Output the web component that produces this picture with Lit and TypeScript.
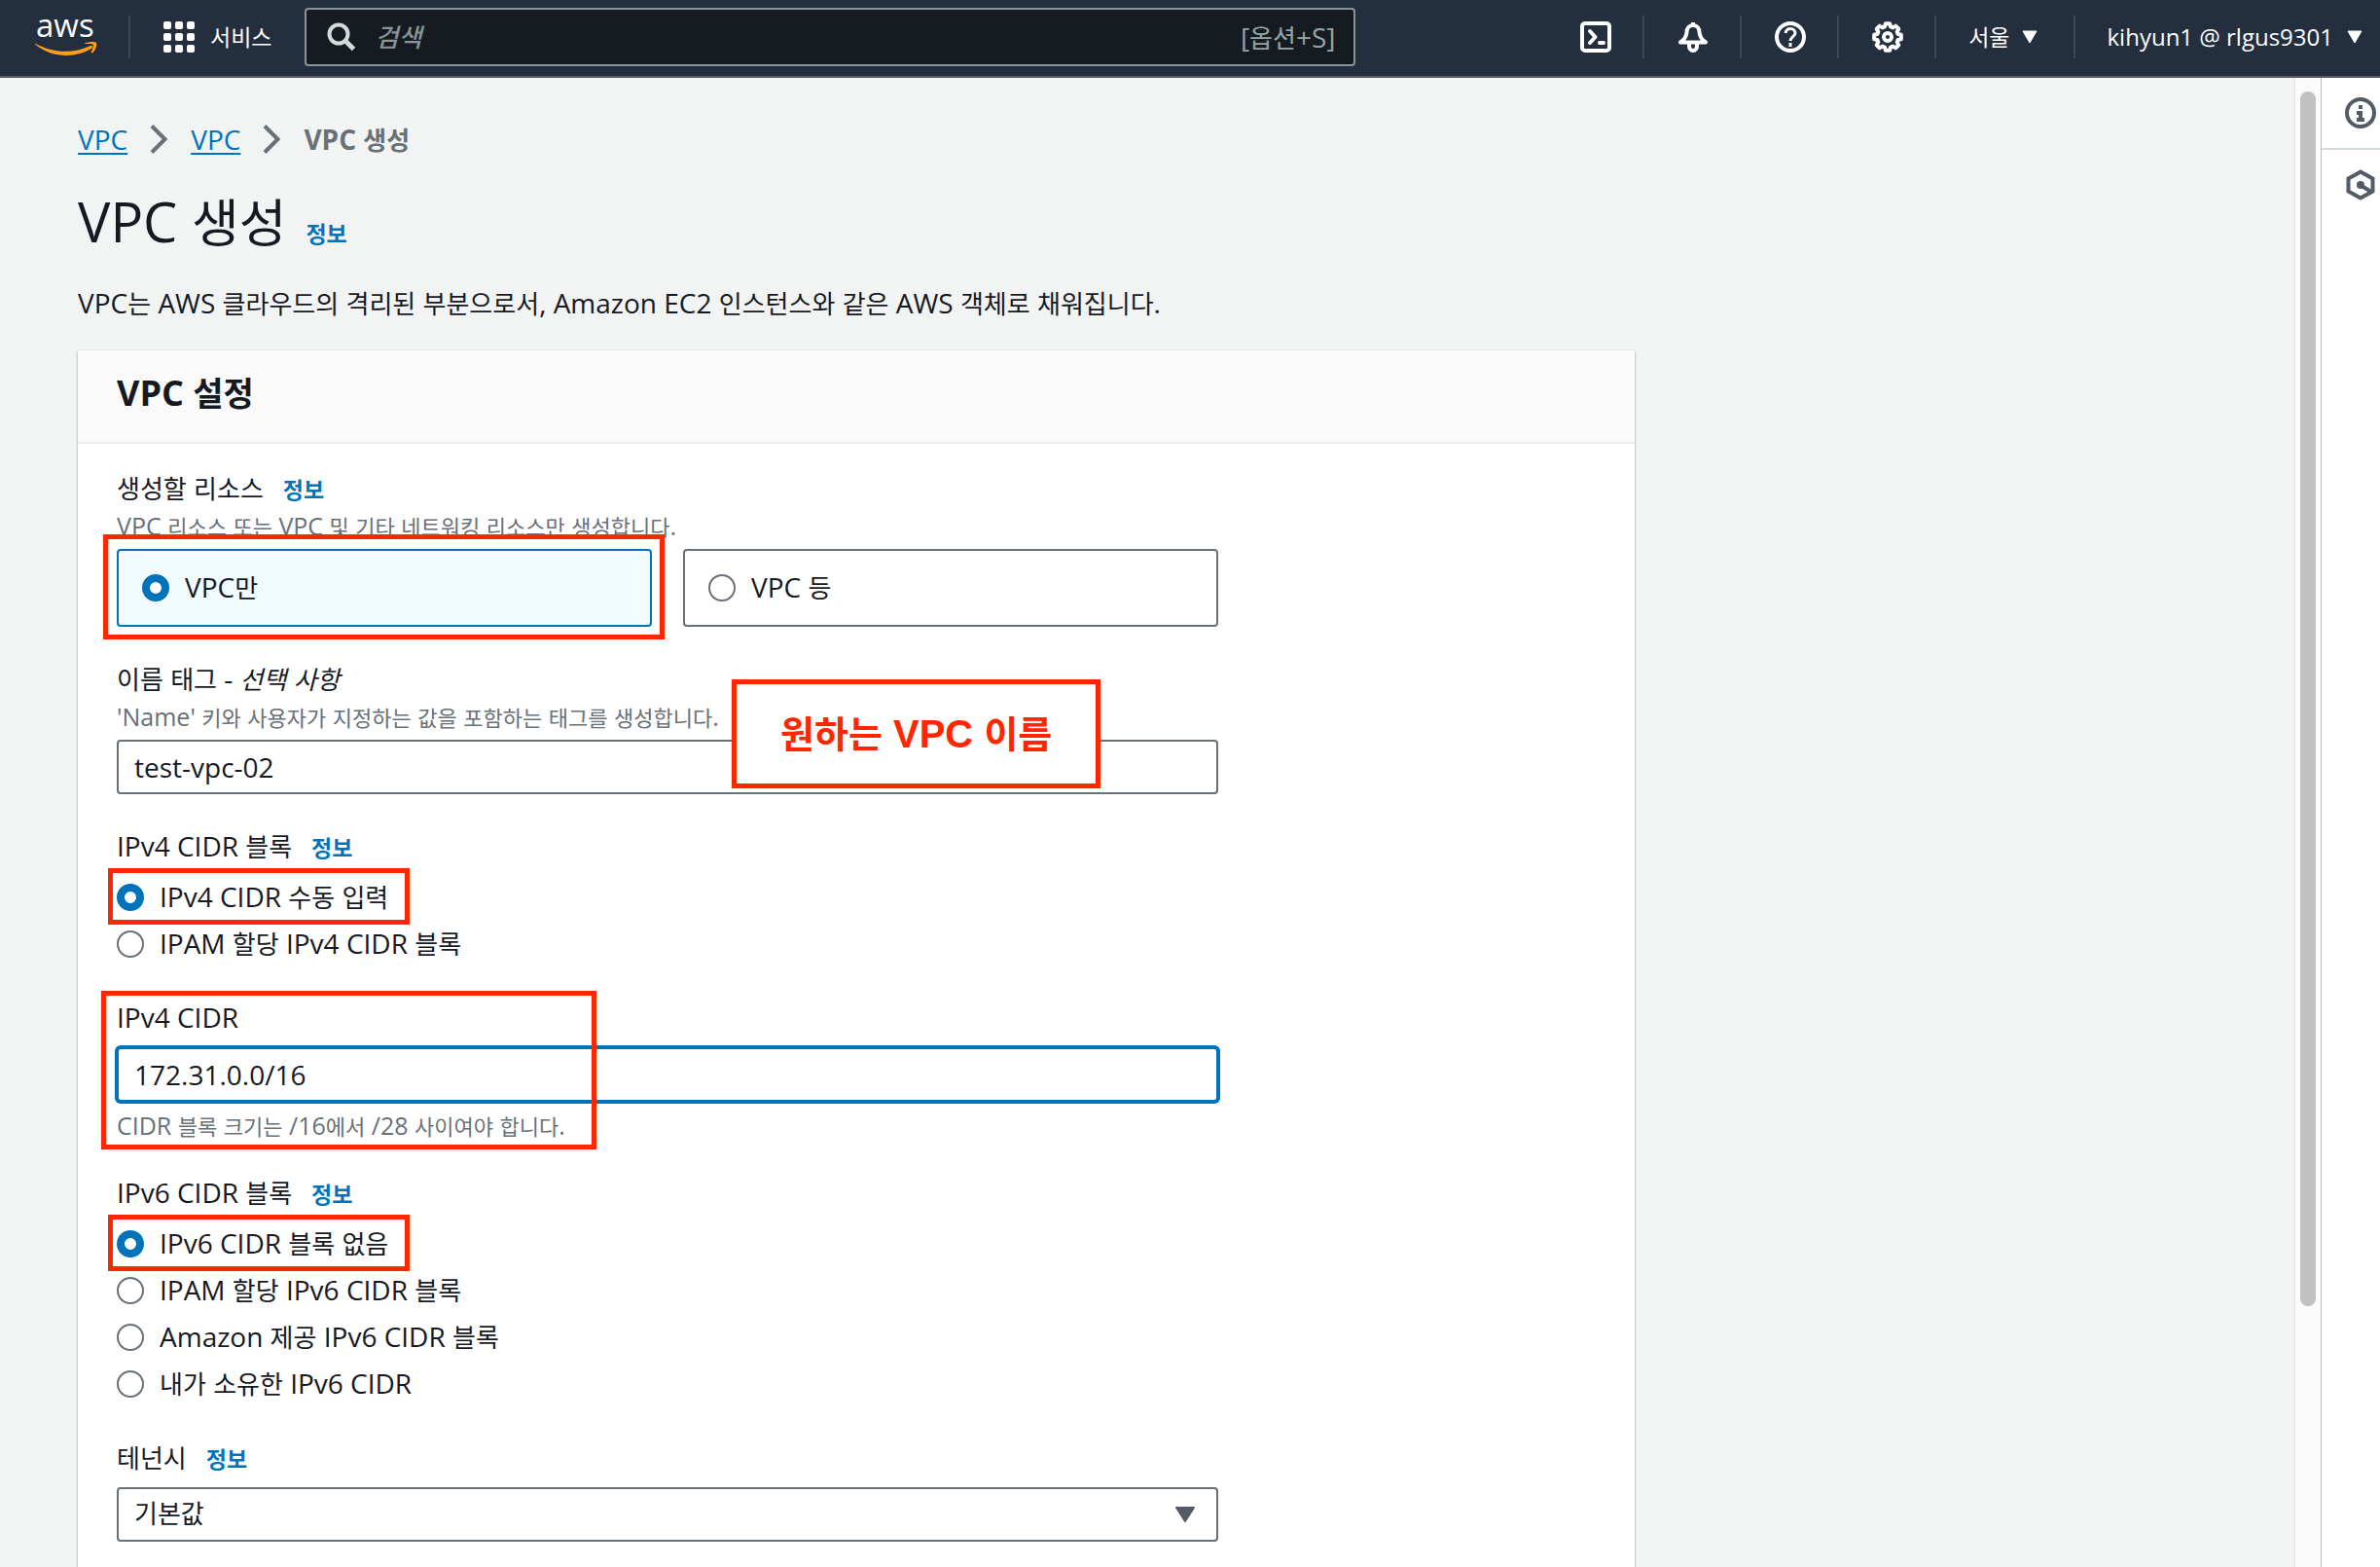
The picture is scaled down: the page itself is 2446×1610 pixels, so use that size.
import { LitElement, html, svg, css, nothing } from "lit";
import { customElement, property, state } from "lit/decorators.js";

/* Hangul glyphs are drawn one step smaller than the Latin text beside them. */
const mixed = (text: string) =>
  text
    .split(/([\uac00-\ud7a3]+)/)
    .map((part) =>
      /[\uac00-\ud7a3]/.test(part) ? html`<span class="ko">${part}</span>` : part
    );

const base = css`
  * {
    box-sizing: border-box;
  }
  :host {
    display: block;
    font-family: "Open Sans", "Noto Sans CJK KR", sans-serif;
    font-size: 28px;
    font-weight: 500;
    line-height: 44px;
    color: #16191f;
  }
  .ko {
    font-size: 26px;
    font-weight: 400;
    line-height: 1;
  }
  a {
    color: #0073bb;
    text-decoration: none;
  }
  button {
    font: inherit;
    color: inherit;
    background: none;
    border: 0;
    padding: 0;
    cursor: pointer;
  }
  svg {
    display: block;
    flex: none;
  }
`;

/* Closed outline of an eight-toothed wheel centred in a 32-unit box. */
const gearOutline = Array.from({ length: 8 }, (_, i) =>
  [
    [-16, 11],
    [-9, 14],
    [9, 14],
    [16, 11],
  ].map(([offset, radius]) => {
    const a = ((i * 45 + offset) * Math.PI) / 180;
    return `${(16 + radius * Math.sin(a)).toFixed(2)},${(16 - radius * Math.cos(a)).toFixed(2)}`;
  })
)
  .flat()
  .join(" ");

const icons = {
  terminal: svg`<rect x="2" y="2" width="28" height="28" rx="3"/><path d="M10 10l5.500 6-5.500 6M20 22h4" stroke-linecap="round"/>`,
  bell: svg`<path d="M16 4c-4 0-6.500 3-6.500 7 0 5-3 8-6.500 10.500h26C25.500 19 22.500 16 22.500 11c0-4-2.500-7-6.500-7zM16 4V1M12 22v3.500a4 4.500 0 0 0 8 0V22"/>`,
  help: svg`<circle cx="16" cy="16" r="14"/><path d="M11 12c.500-2.500 2-4.500 5-4.500s5 2 5 4.500c0 3.500-5 4-5 8M16 22v4" stroke-width="3"/>`,
  gear: svg`<polygon points=${gearOutline} stroke-width="4"/><circle cx="16" cy="16" r="4"/>`,
};

@customElement("console-header")
export class ConsoleHeader extends LitElement {
  static styles = [
    base,
    css`
      .bar {
        display: flex;
        align-items: center;
        padding: 8px 0 10px 36px;
        background: #232f3e;
        border-bottom: 2px solid #545b64;
        color: #fff;
        font-size: 24px;
      }
      .ko {
        font-size: 23px;
      }
      .rule {
        width: 2px;
        height: 44px;
        background: #414750;
        flex: none;
      }
      .logo {
        margin-right: 32px;
      }
      .logo svg {
        overflow: visible;
      }
      .logo text {
        font-family: "Open Sans", sans-serif;
        font-weight: 500;
        font-size: 33px;
        fill: #fff;
      }
      .services {
        display: flex;
        align-items: center;
        gap: 16px;
        margin: 0 34px;
        white-space: nowrap;
      }
      .search {
        flex: 0 1 1080px;
        min-width: 200px;
        height: 60px;
        display: flex;
        align-items: center;
        gap: 19px;
        padding: 0 19px 0 21px;
        background: #161b22;
        border: 2px solid #879596;
        border-radius: 4px;
        color: #95a5a6;
        font-size: 28px;
      }
      .search .ko {
        font-size: 26px;
      }
      .search input {
        flex: 1;
        min-width: 0;
        background: none;
        border: 0;
        outline: 0;
        padding: 0;
        font: inherit;
        font-size: 26px;
        color: #fff;
      }
      .search input::placeholder {
        color: #879596;
        font-style: italic;
        opacity: 1;
      }
      .tools {
        display: flex;
        align-items: center;
        margin-left: auto;
      }
      .tool {
        padding: 0 32px 0 34px;
      }
      .menu {
        display: flex;
        align-items: center;
        gap: 12px;
        padding: 0 37px 0 33px;
        white-space: nowrap;
      }
      .account {
        gap: 14px;
        padding-right: 18px;
      }
    `,
  ];

  private caret = html`<svg width="16" height="14" viewBox="0 0 16 14" aria-hidden="true">
    <path d="M1 1h14L8 13z" fill="#fff" stroke="#fff" stroke-linejoin="round" />
  </svg>`;

  private tool(label: string, shape: unknown) {
    return html`<button class="tool" aria-label=${label}>
        <svg width="32" height="32" viewBox="0 0 32 32" fill="none" stroke="#fff" stroke-width="4" stroke-linejoin="round">
          ${shape}
        </svg>
      </button>
      <span class="rule"></span>`;
  }

  render() {
    return html`<header class="bar">
      <a class="logo" href="#" aria-label="AWS">
        <svg width="64" height="44" viewBox="0 0 64 44">
          <text x="1" y="22">aws</text>
          <path d="M0 28.500C17 38 38 40 57 31c2-.500 3 1 1.500 2.500C42 44 17 44 0 29.500z" fill="#ff9d1c" />
          <path d="M51 28.500c5-2 11-2 12-.500 1 3-1 8-4 10.500l-1.500-.500c1.500-3 3-7 2-8.500-1-1-5-.500-8.500-.500z" fill="#ff9d1c" />
        </svg>
      </a>
      <span class="rule"></span>
      <button class="services">
        <svg width="32" height="32" viewBox="0 0 32 32" fill="#fff" aria-hidden="true">
          ${[0, 12, 24].map((y) => [0, 12, 24].map((x) => svg`<rect x=${x} y=${y} width="8" height="8" rx="2"/>`))}
        </svg>
        <span>${mixed("서비스")}</span>
      </button>
      <label class="search">
        <svg width="30" height="30" viewBox="0 0 30 30" fill="none" stroke="#d5dbdb" stroke-width="4" aria-hidden="true">
          <circle cx="12" cy="12" r="9.500" />
          <path d="M18.500 18.500l9 9" stroke-width="5" />
        </svg>
        <input type="search" placeholder="검색" aria-label="검색" />
        <span>${mixed("[옵션+S]")}</span>
      </label>
      <nav class="tools">
        ${this.tool("CloudShell", icons.terminal)} ${this.tool("알림", icons.bell)}
        ${this.tool("도움말", icons.help)} ${this.tool("설정", icons.gear)}
        <button class="menu"><span>${mixed("서울")}</span>${this.caret}</button>
        <span class="rule"></span>
        <button class="menu account"><span>kihyun1 @ rlgus9301</span>${this.caret}</button>
      </nav>
    </header>`;
  }
}

@customElement("form-field")
export class FormField extends LitElement {
  @property() label = "";
  @property() optional = "";
  @property() hint = "";
  @property() note = "";
  @property({ type: Boolean }) info = false;

  static styles = [
    base,
    css`
      .label {
        display: flex;
        align-items: baseline;
        gap: 20px;
        height: 44px;
        line-height: 42px;
      }
      .info {
        font-weight: 700;
        font-size: 23px;
      }
      .hint {
        font-size: 25px;
        line-height: 32px;
        color: #687078;
      }
      .hint .ko {
        font-size: 22px;
      }
      .control {
        margin: 8px 0 0;
      }
      .note {
        margin-top: 8px;
      }
    `,
  ];

  render() {
    return html`<div class="label">
        <span>${mixed(this.label)}${this.optional ? html` - <em>${mixed(this.optional)}</em>` : nothing}</span>
        ${this.info ? html`<a class="info" href="#">정보</a>` : nothing}
      </div>
      ${this.hint ? html`<div class="hint">${mixed(this.hint)}</div>` : nothing}
      <div class="control"><slot></slot></div>
      ${this.note ? html`<div class="hint note">${mixed(this.note)}</div>` : nothing}`;
  }
}

interface Option {
  value: string;
  text: string;
  marked?: boolean;
}

const ipv4Options: Option[] = [
  { value: "manual", text: "IPv4 CIDR 수동 입력", marked: true },
  { value: "ipam", text: "IPAM 할당 IPv4 CIDR 블록" },
];

const ipv6Options: Option[] = [
  { value: "none", text: "IPv6 CIDR 블록 없음", marked: true },
  { value: "ipam", text: "IPAM 할당 IPv6 CIDR 블록" },
  { value: "amazon", text: "Amazon 제공 IPv6 CIDR 블록" },
  { value: "own", text: "내가 소유한 IPv6 CIDR" },
];

@customElement("app-root")
export class AppRoot extends LitElement {
  @state() private resource = "only";
  @state() private ipv4 = "manual";
  @state() private ipv6 = "none";

  static styles = [
    base,
    css`
      .app {
        display: flex;
        flex-direction: column;
        height: 100vh;
        background: #f2f3f3;
      }
      .body {
        flex: 1;
        min-height: 0;
        display: flex;
      }
      main {
        flex: 1;
        min-width: 0;
        display: flex;
        flex-direction: column;
        gap: 26px;
        padding: 40px 80px 0;
        overflow-y: auto;
        scrollbar-width: none;
      }
      .crumbs {
        display: flex;
        align-items: center;
        gap: 23px;
        line-height: 46px;
        flex: none;
      }
      .crumbs a {
        text-decoration: underline;
        text-decoration-thickness: 2px;
        text-underline-offset: 3px;
      }
      .crumbs strong,
      .crumbs strong .ko {
        color: #687078;
        font-weight: 700;
      }
      .title {
        display: flex;
        align-items: baseline;
        gap: 20px;
        flex: none;
        height: 72px;
        line-height: 70px;
      }
      h1,
      h2,
      p {
        margin: 0;
      }
      .lead {
        line-height: 42px;
        padding-bottom: 2px;
      }
      h1 {
        font-size: 56px;
        font-weight: 500;
      }
      h1 .ko {
        font-size: 53px;
      }
      .info {
        font-size: 23px;
        font-weight: 700;
      }
      .card {
        flex: none;
        width: 100%;
        max-width: 1600px;
        background: #fff;
        box-shadow: 0 1px 2px 0 rgba(0, 28, 36, 0.5);
      }
      h2 {
        padding: 22px 40px 28px;
        background: #fafafa;
        border-bottom: 2px solid #eaeded;
        font-size: 36px;
        line-height: 44px;
        font-weight: 700;
      }
      h2 .ko {
        font-size: 34px;
        font-weight: 700;
      }
      form {
        display: flex;
        flex-direction: column;
        gap: 32px;
        max-width: 1212px;
        padding: 24px 40px 40px;
      }
      .tiles {
        display: grid;
        grid-template-columns: 1fr 1fr;
        gap: 32px;
      }
      .tile {
        display: flex;
        align-items: center;
        gap: 16px;
        height: 80px;
        padding: 0 24px;
        border: 2px solid #687078;
        border-radius: 4px;
      }
      .tile.on {
        border-color: #0073bb;
        background: #f1faff;
      }
      .options {
        display: flex;
        flex-direction: column;
        align-items: flex-start;
        gap: 4px;
      }
      .option {
        display: flex;
        align-items: center;
        gap: 16px;
        height: 44px;
      }
      .caption {
        padding-bottom: 2px;
      }
      input[type="radio"] {
        appearance: none;
        flex: none;
        width: 28px;
        height: 28px;
        margin: 0;
        border: 2px solid #687078;
        border-radius: 50%;
        background: #fff;
      }
      input[type="radio"]:checked {
        border: 8px solid #0073bb;
      }
      .text,
      select {
        display: block;
        width: 100%;
        height: 56px;
        padding: 0 16px;
        border: 2px solid #687078;
        border-radius: 4px;
        background: #fff;
        font: inherit;
        color: inherit;
        outline: 0;
      }
      .focused {
        border-color: #0073bb;
        box-shadow: 0 0 0 2px #0073bb;
      }
      select {
        appearance: none;
        font-size: 26px;
        font-weight: 400;
        padding-bottom: 2px;
      }
      .select {
        display: grid;
        align-items: center;
      }
      .select > * {
        grid-area: 1 / 1;
      }
      .select svg {
        justify-self: end;
        margin-right: 24px;
        pointer-events: none;
      }
      .anchor {
        position: relative;
      }
      .mark {
        position: absolute;
        border: 5px solid #ff2600;
        pointer-events: none;
        z-index: 1;
      }
      .mark-tile {
        inset: -17px -15px -15px -16px;
      }
      .mark-option {
        inset: -8px -22px -6px -9px;
      }
      .mark-field {
        inset: -6px auto -9px -16px;
        width: 509px;
      }
      .callout {
        left: 632px;
        top: 22px;
        padding: 29px 45px;
        background: #fff;
        color: #ff2600;
        font-family: "Liberation Sans", "Noto Sans CJK KR", sans-serif;
        font-size: 40px;
        font-weight: 700;
        white-space: nowrap;
      }
      .callout .ko {
        font-size: 38px;
        font-weight: 700;
      }
      .track {
        flex: none;
        display: grid;
        grid-template-rows: 14fr 3fr;
        width: 28px;
        padding: 14px 5px 0 5px;
        background: #fafafa;
        border-left: 2px solid #e8e8e8;
      }
      .thumb {
        border-radius: 8px;
        background: #c1c1c1;
      }
      .rail {
        flex: none;
        width: 61px;
        overflow: hidden;
        background: #fff;
        border-left: 1px solid #b8bfc0;
      }
      .rail button {
        display: block;
        width: 100%;
        padding: 20px 0 20px 24px;
      }
      .rail button + button {
        border-top: 2px solid #d5dbdb;
      }
    `,
  ];

  private chevron = html`<svg width="19" height="30" viewBox="0 0 19 30" fill="none" stroke="#687078" stroke-width="4" aria-hidden="true">
    <path d="M2 1.500l13.500 13.500L2 28.500" />
  </svg>`;

  private tile(value: string, text: string) {
    const on = this.resource === value;
    return html`<label class="tile anchor ${on ? "on" : ""}">
      <input type="radio" name="resource" .checked=${on} @change=${() => (this.resource = value)} />
      <span class="caption">${mixed(text)}</span>
      ${value === "only" ? html`<i class="mark mark-tile"></i>` : nothing}
    </label>`;
  }

  private options(name: string, list: Option[], current: string, pick: (v: string) => void) {
    return html`<div class="options" role="radiogroup">
      ${list.map(
        (o) => html`<label class="option anchor">
          <input type="radio" name=${name} .checked=${o.value === current} @change=${() => pick(o.value)} />
          <span class="caption">${mixed(o.text)}</span>
          ${o.marked ? html`<i class="mark mark-option"></i>` : nothing}
        </label>`
      )}
    </div>`;
  }

  render() {
    return html`<div class="app">
      <console-header></console-header>
      <div class="body">
        <main>
          <nav class="crumbs">
            <a href="#">VPC</a>${this.chevron}<a href="#">VPC</a>${this.chevron}<strong>${mixed("VPC 생성")}</strong>
          </nav>
          <div class="title">
            <h1>${mixed("VPC 생성")}</h1>
            <a class="info" href="#">정보</a>
          </div>
          <p class="lead">${mixed("VPC는 AWS 클라우드의 격리된 부분으로서, Amazon EC2 인스턴스와 같은 AWS 객체로 채워집니다.")}</p>
          <section class="card">
            <h2>${mixed("VPC 설정")}</h2>
            <form>
              <form-field label="생성할 리소스" info hint="VPC 리소스 또는 VPC 및 기타 네트워킹 리소스만 생성합니다.">
                <div class="tiles">${this.tile("only", "VPC만")}${this.tile("more", "VPC 등")}</div>
              </form-field>
              <div class="anchor">
                <form-field label="이름 태그" optional="선택 사항" hint="'Name' 키와 사용자가 지정하는 값을 포함하는 태그를 생성합니다.">
                  <input class="text" type="text" value="test-vpc-02" aria-label="이름 태그" />
                </form-field>
                <div class="mark callout">${mixed("원하는 VPC 이름")}</div>
              </div>
              <form-field label="IPv4 CIDR 블록" info>
                ${this.options("ipv4", ipv4Options, this.ipv4, (v) => (this.ipv4 = v))}
              </form-field>
              <div class="anchor">
                <form-field label="IPv4 CIDR" note="CIDR 블록 크기는 /16에서 /28 사이여야 합니다.">
                  <input class="text focused" type="text" value="172.31.0.0/16" aria-label="IPv4 CIDR" />
                </form-field>
                <i class="mark mark-field"></i>
              </div>
              <form-field label="IPv6 CIDR 블록" info>
                ${this.options("ipv6", ipv6Options, this.ipv6, (v) => (this.ipv6 = v))}
              </form-field>
              <form-field label="테넌시" info>
                <div class="select">
                  <select aria-label="테넌시">
                    <option>기본값</option>
                  </select>
                  <svg width="20" height="16" viewBox="0 0 20 16" aria-hidden="true">
                    <path d="M1 1h18l-9 14z" fill="#545b64" stroke="#545b64" stroke-width="2" stroke-linejoin="round" />
                  </svg>
                </div>
              </form-field>
            </form>
          </section>
        </main>
        <div class="track" aria-hidden="true"><div class="thumb"></div></div>
        <aside class="rail">
          <button aria-label="정보">
            <svg width="32" height="32" viewBox="0 0 32 32" fill="none" stroke="#545b64" stroke-width="4">
              <circle cx="16" cy="16" r="14" />
              <path d="M16 8v4M12 16h4v7M12 23h8" />
            </svg>
          </button>
          <button aria-label="리소스">
            <svg width="32" height="32" viewBox="0 0 32 32" fill="none" stroke="#545b64" stroke-width="4">
              <path d="M16 2.500l12.500 7v13L16 29.500l-12.500-7v-13z" />
              <circle cx="16" cy="16" r="4" fill="#545b64" stroke="none" />
              <path d="M17 17l10 6" />
            </svg>
          </button>
        </aside>
      </div>
    </div>`;
  }
}
